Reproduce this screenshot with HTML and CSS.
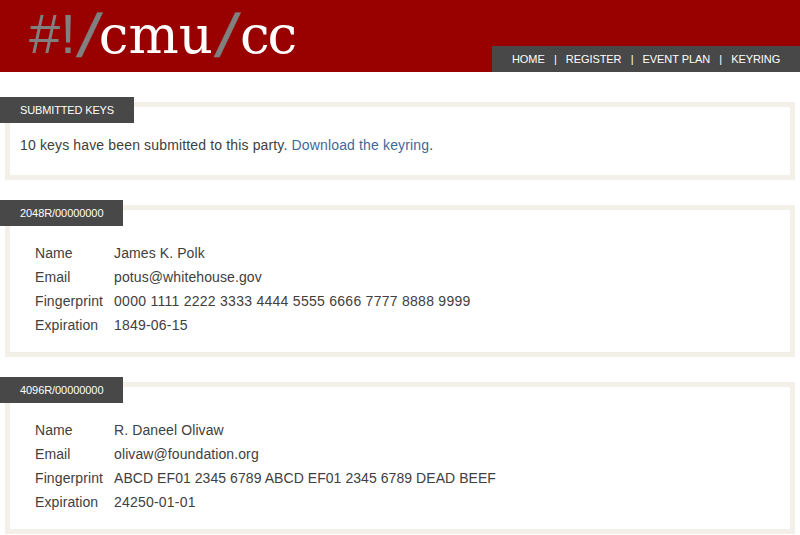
FILE: index.html
```
<!DOCTYPE html>
<html lang="en">
<head>
<meta charset="utf-8">
<title>#!/cmu/cc</title>
<link rel="stylesheet" href="styles.css">
</head>
<body>
<header class="header">
  <h1 class="logo"><span class="bang">#!</span><span class="slash">/</span><span class="name-a">cmu</span><span class="slash slash-b">/</span><span class="name-b">cc</span></h1>
  <nav class="nav">
    <a href="#">HOME</a><span class="sep">|</span><a href="#">REGISTER</a><span class="sep">|</span><a href="#">EVENT PLAN</a><span class="sep">|</span><a href="#">KEYRING</a>
  </nav>
</header>
<main class="main">
  <section class="box box-intro">
    <h2 class="tab tab-words">SUBMITTED KEYS</h2>
    <p class="intro">10 keys have been submitted to this party. <a href="#">Download the keyring</a>.</p>
  </section>
  <section class="box">
    <h2 class="tab">2048R/00000000</h2>
    <dl class="key">
      <dt>Name</dt><dd>James K. Polk</dd>
      <dt>Email</dt><dd>potus@whitehouse.gov</dd>
      <dt>Fingerprint</dt><dd class="digits">0000 1111 2222 3333 4444 5555 6666 7777 8888 9999</dd>
      <dt>Expiration</dt><dd class="date">1849-06-15</dd>
    </dl>
  </section>
  <section class="box">
    <h2 class="tab">4096R/00000000</h2>
    <dl class="key">
      <dt>Name</dt><dd>R. Daneel Olivaw</dd>
      <dt>Email</dt><dd>olivaw@foundation.org</dd>
      <dt>Fingerprint</dt><dd class="hex">ABCD EF01 2345 6789 ABCD EF01 2345 6789 DEAD BEEF</dd>
      <dt>Expiration</dt><dd class="date">24250-01-01</dd>
    </dl>
  </section>
</main>
</body>
</html>
```
FILE: styles.css
```
* { box-sizing: border-box; }
html, body { margin: 0; padding: 0; }
body {
  background: #fff;
  color: #404040;
  font-family: "Liberation Sans", Arial, sans-serif;
  font-size: 14px;
  line-height: 24px;
  overflow: hidden;
}
.header {
  height: 72px;
  background: #990000;
  display: flex;
  justify-content: space-between;
  align-items: flex-end;
  padding-left: 29px;
}
.logo {
  margin: 0;
  align-self: flex-start;
  height: 72px;
  font-family: "DejaVu Serif", serif;
  font-weight: normal;
  font-size: 53px;
  line-height: 68px;
  color: #fff;
  white-space: nowrap;
}
.bang {
  color: #808080;
  font-family: "Liberation Sans", sans-serif;
  font-size: 56px;
}
.slash {
  display: inline-block;
  color: #808080;
  font-family: "Noto Sans", sans-serif;
  font-size: 62px;
  line-height: 60px;
  vertical-align: -4px;
  margin: 0 -2px 0 2px;
  transform: skewX(-6deg);
  -webkit-text-stroke: 0.6px #808080;
}
.slash-b { margin-left: 3px; }
.name-b { margin-left: 3px; letter-spacing: -2px; }
.nav {
  width: 308px;
  height: 26px;
  background: #484848;
  color: #fff;
  font-size: 11px;
  line-height: 26px;
  padding-left: 20px;
  white-space: nowrap;
  letter-spacing: -0.08px;
}
.nav a { color: #fff; text-decoration: none; }
.sep { margin: 0 9.2px; }
.main {
  padding: 30px 5px 0;
  display: flex;
  flex-direction: column;
  gap: 25px;
}
.box {
  position: relative;
  border: 5px solid #f3f0e9;
  padding: 31px 10px 15px;
}
.box-intro { padding-top: 26px; height: 78px; }
.tab {
  position: absolute;
  left: -10px;
  top: -10px;
  margin: 0;
  height: 26px;
  padding: 0 20px;
  background: #484848;
  color: #fff;
  font-weight: normal;
  font-size: 11px;
  line-height: 26px;
  white-space: nowrap;
  letter-spacing: -0.07px;
}
.tab-words { letter-spacing: -0.14px; }
.intro { margin: 0; letter-spacing: 0.15px; }
.intro a { color: #3d6a9a; text-decoration: none; }
.key {
  margin: 0;
  display: grid;
  grid-template-columns: max-content 1fr;
  column-gap: 11px;
  padding-left: 15px;
  letter-spacing: 0.1px;
}
.key dt, .key dd { margin: 0; }
.key .digits { letter-spacing: 0.27px; }
.key .hex { letter-spacing: 0.06px; }
.key .date { letter-spacing: 0.2px; }
```
